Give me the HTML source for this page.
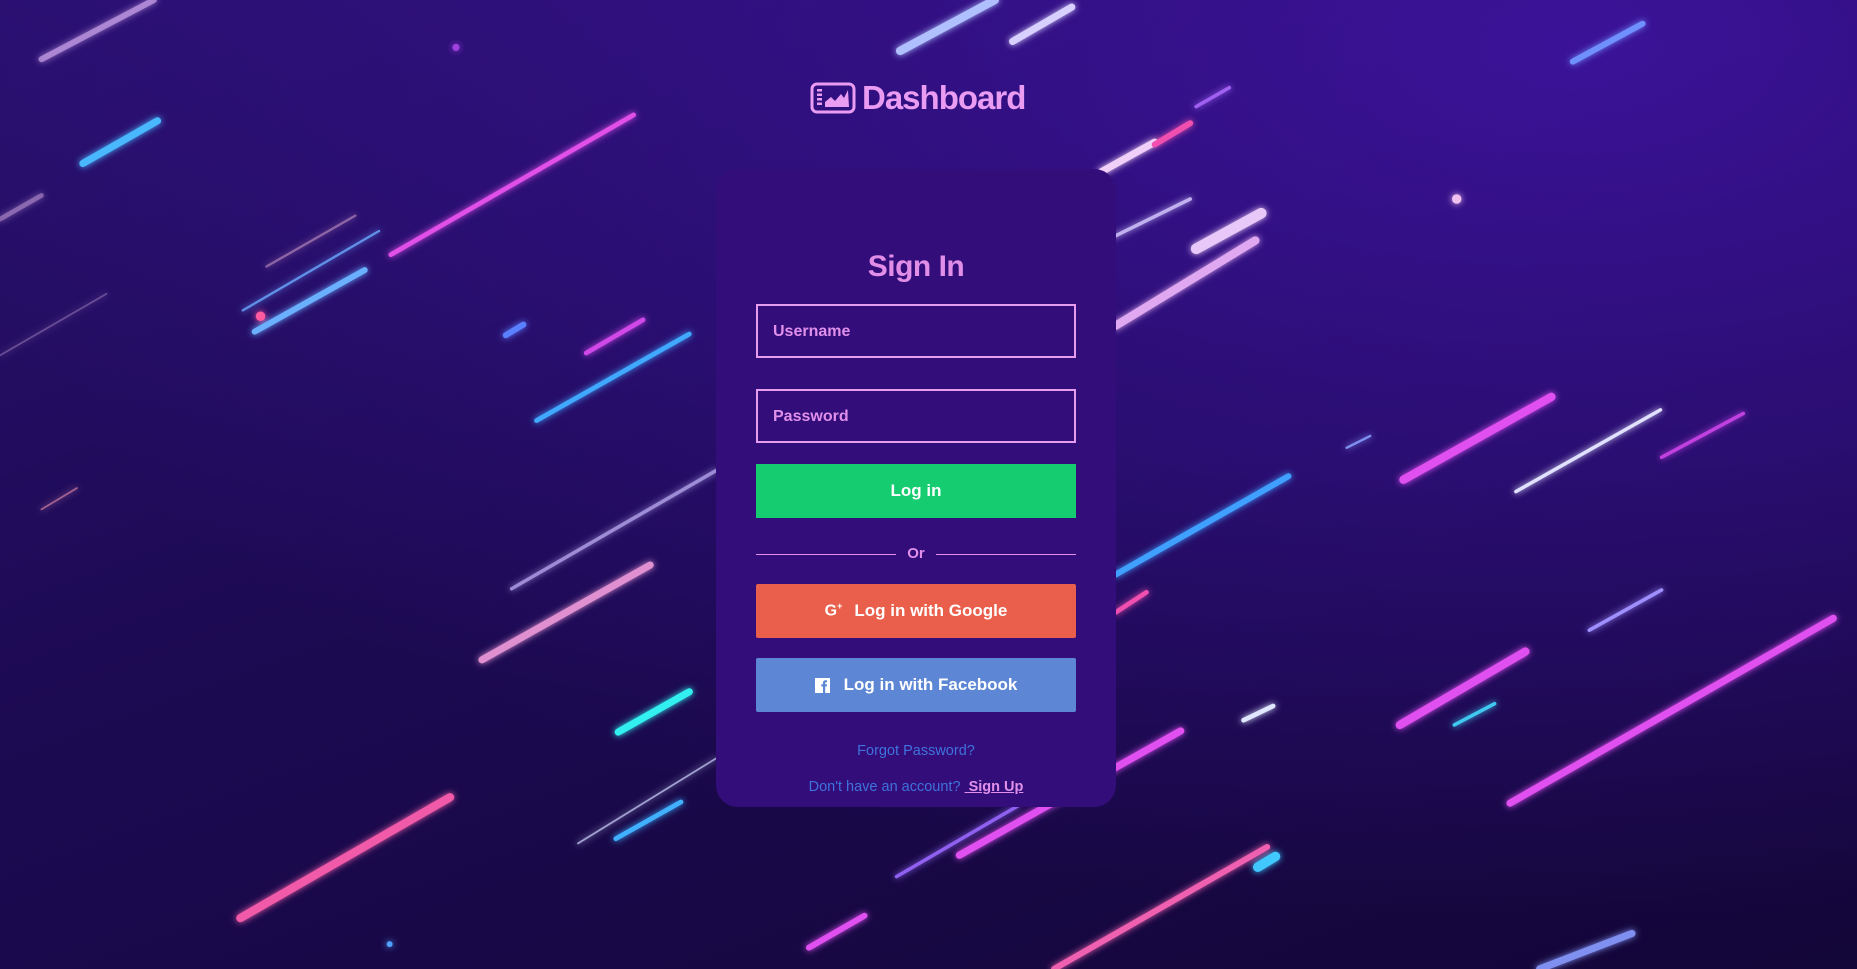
<!DOCTYPE html>
<html><head><meta charset="utf-8"><style>
*{box-sizing:border-box;margin:0;padding:0}
html,body{width:1857px;height:969px;overflow:hidden}
body{position:relative;font-family:"Liberation Sans",sans-serif;background:linear-gradient(160deg,#2a1070 0%,#1c0a52 45%,#130638 100%)}
.bg{position:absolute;inset:0}
.logo{position:absolute;left:810px;top:76px;height:44px;display:flex;align-items:center;color:#e99cf2;font-family:"Liberation Sans",sans-serif;font-weight:bold;font-size:33px;letter-spacing:-1px}
.card{position:absolute;left:716px;top:169px;width:400px;height:638px;background:#330d7a;border-radius:22px}
h1{position:absolute;top:81px;left:0;right:0;text-align:center;color:#e08ee8;font-family:"Liberation Sans",sans-serif;font-size:30px;font-weight:bold;letter-spacing:-0.5px}
.inp{position:absolute;left:40px;width:320px;height:54px;border:2px solid #e69df0;color:#e090ea;font-weight:bold;font-size:16px;padding-left:15px;line-height:52px}
.btn{position:absolute;left:40px;width:320px;height:54px;color:#fff;font-weight:bold;font-size:17px;display:flex;align-items:center;justify-content:center;border-radius:2px}
.or{position:absolute;left:40px;width:320px;top:375px;height:20px;color:#e090ea;font-weight:bold;font-size:15px;text-align:center;line-height:20px}
.or:before,.or:after{content:"";position:absolute;top:10px;height:1px;width:140px;background:#e090ea}
.or:before{left:0}.or:after{right:0}
.lnk{position:absolute;left:0;right:0;text-align:center;color:#3f72dc;font-size:14.5px}
.lnk u{color:#e090ea;font-weight:bold}
</style></head><body>
<svg class="bg" viewBox="0 0 1568 818" preserveAspectRatio="none" width="1857" height="969">
<defs><filter id="g" x="-50%" y="-50%" width="200%" height="200%"><feGaussianBlur stdDeviation="3" result="b"/><feMerge><feMergeNode in="b"/><feMergeNode in="SourceGraphic"/></feMerge></filter>
<radialGradient id="r" cx="0.85" cy="0.05" r="0.9"><stop offset="0" stop-color="#4214a8" stop-opacity="0.8"/><stop offset="1" stop-color="#4214a8" stop-opacity="0"/></radialGradient></defs>
<rect width="1568" height="818" fill="url(#r)"/>
<g stroke-linecap="round" filter="url(#g)" fill="none">
<line x1="35" y1="50" x2="130" y2="0" stroke="#c8a0e8" stroke-width="5" opacity=".7"/>
<line x1="70" y1="138" x2="133" y2="102" stroke="#4ab8ff" stroke-width="6"/>
<line x1="0" y1="185" x2="35" y2="165" stroke="#b08acc" stroke-width="4" opacity=".6"/>
<line x1="225" y1="225" x2="300" y2="182" stroke="#c090c0" stroke-width="2" opacity=".6"/>
<line x1="205" y1="262" x2="320" y2="195" stroke="#6aa8ff" stroke-width="2" opacity=".8"/>
<line x1="215" y1="280" x2="308" y2="228" stroke="#6ab0ff" stroke-width="5"/>
<circle cx="220" cy="267" r="4" fill="#ff5aa0"/>
<line x1="330" y1="215" x2="535" y2="97" stroke="#e050e8" stroke-width="4"/>
<line x1="0" y1="300" x2="90" y2="248" stroke="#9070b0" stroke-width="1.5" opacity=".6"/>
<line x1="427" y1="283" x2="442" y2="274" stroke="#5a80ff" stroke-width="5"/>
<line x1="495" y1="298" x2="543" y2="270" stroke="#d048e8" stroke-width="4"/>
<line x1="453" y1="355" x2="582" y2="282" stroke="#40a8ff" stroke-width="4"/>
<line x1="35" y1="430" x2="65" y2="412" stroke="#a06090" stroke-width="1.5"/>
<line x1="432" y1="497" x2="605" y2="397" stroke="#b0a0e8" stroke-width="3" opacity=".8"/>
<line x1="407" y1="557" x2="549" y2="477" stroke="#e090d0" stroke-width="6"/>
<line x1="522" y1="618" x2="582" y2="584" stroke="#30f0f0" stroke-width="6"/>
<line x1="203" y1="775" x2="380" y2="673" stroke="#f05aa8" stroke-width="7"/>
<line x1="488" y1="712" x2="605" y2="640" stroke="#a0a0d0" stroke-width="1.5"/>
<line x1="520" y1="708" x2="575" y2="677" stroke="#40b0ff" stroke-width="4"/>
<circle cx="385" cy="40" r="3" fill="#a040e0"/>
<circle cx="329" cy="797" r="2.5" fill="#50a0ff"/>
<line x1="760" y1="43" x2="840" y2="0" stroke="#b0c0ff" stroke-width="7"/>
<line x1="855" y1="35" x2="905" y2="6" stroke="#d8d0ff" stroke-width="6"/>
<line x1="930" y1="145" x2="975" y2="120" stroke="#f0d0f8" stroke-width="6"/>
<line x1="975" y1="122" x2="1005" y2="104" stroke="#f050b0" stroke-width="5"/>
<line x1="1010" y1="90" x2="1038" y2="74" stroke="#a060f0" stroke-width="3"/>
<line x1="940" y1="200" x2="1005" y2="168" stroke="#c0b0f0" stroke-width="3"/>
<line x1="1010" y1="210" x2="1065" y2="180" stroke="#e8c8f8" stroke-width="9"/>
<line x1="942" y1="275" x2="1060" y2="203" stroke="#e0a8f0" stroke-width="7"/>
<circle cx="1230" cy="168" r="4" fill="#f0c0f0"/>
<line x1="1328" y1="52" x2="1387" y2="20" stroke="#7090ff" stroke-width="5"/>
<line x1="1185" y1="405" x2="1310" y2="335" stroke="#e050f0" stroke-width="7"/>
<line x1="1280" y1="415" x2="1402" y2="346" stroke="#e0e0ff" stroke-width="3"/>
<line x1="1403" y1="386" x2="1472" y2="349" stroke="#c040e0" stroke-width="3"/>
<line x1="1137" y1="378" x2="1157" y2="368" stroke="#8090f0" stroke-width="2"/>
<line x1="942" y1="485" x2="1088" y2="402" stroke="#40a0ff" stroke-width="5"/>
<line x1="942" y1="517" x2="968" y2="500" stroke="#f050b0" stroke-width="4"/>
<line x1="1342" y1="532" x2="1403" y2="498" stroke="#a090ff" stroke-width="3"/>
<line x1="1182" y1="612" x2="1288" y2="550" stroke="#e050f0" stroke-width="7"/>
<line x1="1228" y1="612" x2="1262" y2="594" stroke="#40c8f0" stroke-width="3"/>
<line x1="1050" y1="608" x2="1075" y2="596" stroke="#e0e8ff" stroke-width="4"/>
<line x1="1275" y1="678" x2="1548" y2="522" stroke="#e050f0" stroke-width="6"/>
<line x1="810" y1="722" x2="997" y2="617" stroke="#e050f0" stroke-width="6"/>
<line x1="757" y1="740" x2="860" y2="680" stroke="#9060f0" stroke-width="3"/>
<line x1="890" y1="818" x2="1070" y2="715" stroke="#f060b0" stroke-width="5"/>
<line x1="1062" y1="732" x2="1077" y2="723" stroke="#40c8ff" stroke-width="8"/>
<line x1="683" y1="800" x2="730" y2="773" stroke="#e050f0" stroke-width="5"/>
<line x1="1300" y1="818" x2="1378" y2="788" stroke="#8090f0" stroke-width="6"/>
</g></svg>
<div class="logo"><svg width="46" height="32" viewBox="0 0 46 32" style="margin-right:6px"><rect x="2" y="2" width="42" height="28" rx="5" fill="none" stroke="#e99cf2" stroke-width="3"/><g fill="#e99cf2"><rect x="7" y="7" width="5" height="2.5"/><rect x="7" y="11.5" width="5" height="2.5"/><rect x="7" y="16" width="5" height="2.5"/><rect x="7" y="20.5" width="5" height="2.5"/><path d="M15 25 L15 20 L21 15 L25 19 L31 12 L34 16 L38 8 L39 25 Z"/></g></svg>Dashboard</div>
<div class="card">
<h1>Sign In</h1>
<div class="inp" style="top:135px">Username</div>
<div class="inp" style="top:220px">Password</div>
<div class="btn" style="top:295px;background:#15cc70;border-radius:0">Log in</div>
<div class="or">Or</div>
<div class="btn" style="top:415px;background:#ea5f4c"><span style="font-size:16px;margin-right:12px">G<sup style="font-size:9px">+</sup></span>Log in with Google</div>
<div class="btn" style="top:489px;background:#5d86d5"><svg width="15" height="15" viewBox="0 0 15 15" style="margin-right:14px"><rect width="15" height="15" fill="#fff"/><path d="M8 15V8.5H6.3V6.3H8V4.8C8 3.2 9 2.3 10.4 2.3H12V4.3H11C10.4 4.3 10.2 4.6 10.2 5.1V6.3H12L11.7 8.5H10.2V15Z" fill="#5d86d5"/></svg>Log in with Facebook</div>
<div class="lnk" style="top:574px">Forgot Password?</div>
<div class="lnk" style="top:610px">Don't have an account? <u>&nbsp;Sign Up</u></div>
</div>
</body></html>
